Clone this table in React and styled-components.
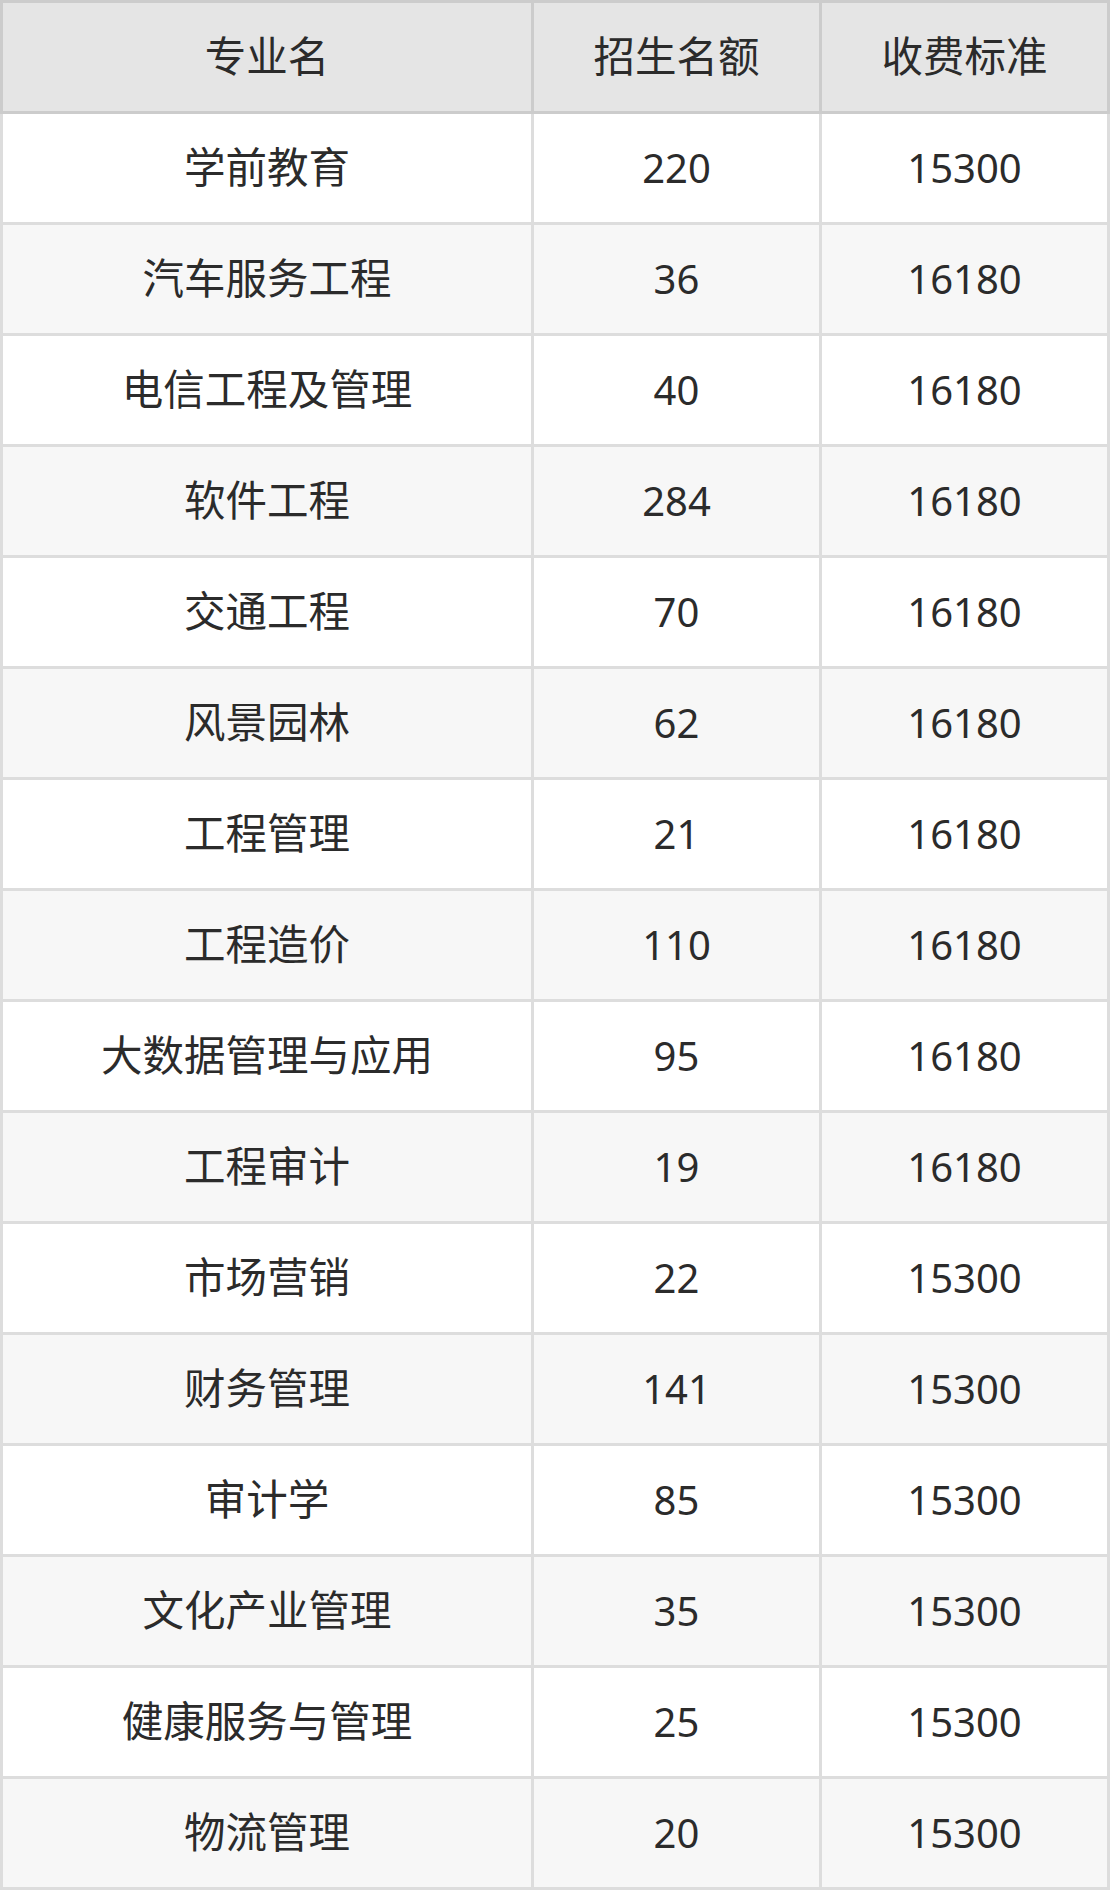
import styled, { createGlobalStyle } from "styled-components";

const GlobalStyle = createGlobalStyle`
	body {
		margin: 0;
		background: #fff;
		font-family: "Noto Sans", "Noto Sans CJK SC", sans-serif;
	}
`;

const rows = [
	["学前教育", "220", "15300"],
	["汽车服务工程", "36", "16180"],
	["电信工程及管理", "40", "16180"],
	["软件工程", "284", "16180"],
	["交通工程", "70", "16180"],
	["风景园林", "62", "16180"],
	["工程管理", "21", "16180"],
	["工程造价", "110", "16180"],
	["大数据管理与应用", "95", "16180"],
	["工程审计", "19", "16180"],
	["市场营销", "22", "15300"],
	["财务管理", "141", "15300"],
	["审计学", "85", "15300"],
	["文化产业管理", "35", "15300"],
	["健康服务与管理", "25", "15300"],
	["物流管理", "20", "15300"],
];

const App = () => (
	<>
		<GlobalStyle />
		<Table>
			<Head>
				<Row>
					<Cell $head $cjk>专业名</Cell>
					<Cell $head $cjk>招生名额</Cell>
					<Cell $head $cjk>收费标准</Cell>
				</Row>
			</Head>
			<Body>
				{rows.map((r, i) => (
					<Row key={r[0]}>
						{r.map((v, j) => (
							<Cell key={j} $alt={i % 2 === 1} $cjk={j === 0}>
								{v}
							</Cell>
						))}
					</Row>
				))}
			</Body>
		</Table>
	</>
);

const Table = styled.div`
	width: 1110px;
	display: flex;
	flex-direction: column;
`;

const Head = styled.div`
	background: #cccccc;
	padding: 3px;
`;

const Body = styled.div`
	background: #dddddd;
	padding: 0 3px 3px;
	display: flex;
	flex-direction: column;
	gap: 3px;
`;

const Row = styled.div`
	display: grid;
	grid-template-columns: 528px 285px 285px;
	gap: 3px;
`;

const Cell = styled.div`
	height: 108px;
	display: flex;
	align-items: center;
	justify-content: center;
	font-size: ${(p) => (p.$cjk ? "41.5px" : "40px")};
	line-height: 1;
	color: #2b2b2b;
	background: ${(p) => (p.$head ? "#e5e5e5" : p.$alt ? "#f7f7f7" : "#ffffff")};
`;

export default App;
